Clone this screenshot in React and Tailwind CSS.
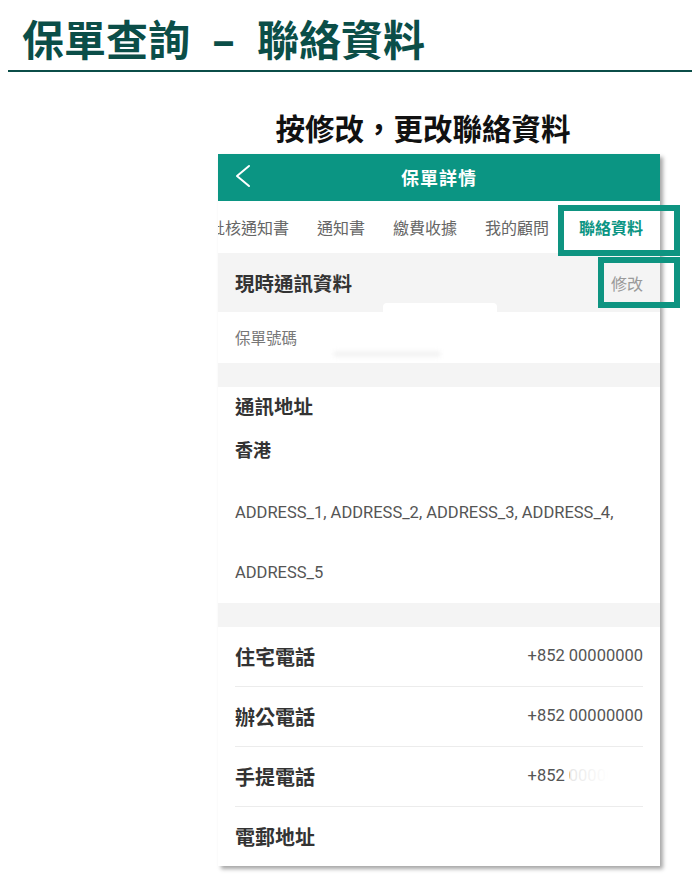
import React from "react";

const font = { fontFamily: '"Noto Sans CJK TC", "Noto Sans", sans-serif' };

const tabs = ["批核通知書", "通知書", "繳費收據", "我的顧問"];

const phones = [
  { label: "住宅電話", value: "+852 00000000" },
  { label: "辦公電話", value: "+852 00000000" },
  { label: "手提電話", value: "+852 00000000", masked: true },
];

const ChevronLeft = () => (
  <svg width="18" height="24" viewBox="0 0 18 24" fill="none">
    <path d="M15 2 L3 12 L15 22" stroke="white" strokeWidth="2" strokeLinecap="round" strokeLinejoin="round" />
  </svg>
);

const PhoneRow = ({ label, value, masked, last }) => (
  <div className={`mx-[17px] flex items-center justify-between ${last ? "h-[59px]" : "h-[60px] border-b border-[#ececec]"}`}>
    <span className="text-[20px] font-bold text-[#333]">{label}</span>
    {value && (
      <span className="relative text-[16.5px] text-[#555]" style={{ fontFamily: "Roboto, sans-serif" }}>
        {value}
        {masked && <span className="absolute top-[-4px] bottom-[-4px] left-[42px] right-[-4px] bg-gradient-to-r from-white/85 via-white to-white" />}
      </span>
    )}
  </div>
);

export default function App() {
  return (
    <div className="relative w-[692px] h-[876px] overflow-hidden bg-white" style={font}>
      {/* page title */}
      <div className="pt-[13px] pl-[22px] h-[64px] text-[42px] font-bold leading-[50px] text-[#0b4e48] whitespace-nowrap">
        保單查詢<span className="mx-[22px] font-black">–</span>聯絡資料
      </div>
      <div className="mt-[6px] ml-[8px] h-[2px] bg-[#0b4e48]" />

      <div className="mt-[38px] ml-[273px] w-[300px] text-center text-[29.5px] font-bold leading-[34px] text-[#111] whitespace-nowrap">
        按修改，更改聯絡資料
      </div>

      {/* phone screen */}
      <div className="relative mt-[10px] ml-[218px] w-[442px] bg-white shadow-[3px_3px_4px_rgba(0,0,0,0.35)]">
        <div className="relative flex h-[47px] items-center justify-center bg-[#0b9583]">
          <span className="absolute left-[16px] top-[10px]"><ChevronLeft /></span>
          <span className="text-[18px] font-bold tracking-[1px] text-white">保單詳情</span>
        </div>

        <div className="flex h-[52px] items-center overflow-hidden whitespace-nowrap">
          <div className="ml-[-9px] flex items-center gap-[28px] text-[16px] text-[#666]">
            {tabs.map((t) => (
              <span key={t}>{t}</span>
            ))}
            <span className="ml-[2px] font-bold text-[#0b9583]">聯絡資料</span>
          </div>
        </div>

        <div className="relative flex h-[59px] items-center justify-between bg-[#f4f4f4] px-[17px]">
          <span className="text-[19.5px] font-bold text-[#333]">現時通訊資料</span>
          <span className="text-[16px] text-[#9a9a9a]">修改</span>
          <span className="absolute bottom-0 left-[165px] h-[9px] w-[114px] rounded-t-[4px] bg-white" />
        </div>

        <div className="relative flex h-[51px] items-center px-[17px]">
          <span className="text-[15.5px] text-[#777]">保單號碼</span>
          <span className="absolute bottom-[6px] left-[115px] h-[6px] w-[108px] rounded-full bg-[#f3f3f3] blur-[2px]" />
        </div>

        <div className="h-[24px] bg-[#f4f4f4]" />

        <div className="px-[17px]">
          <div className="flex h-[38px] items-center text-[19.5px] font-bold text-[#333]">通訊地址</div>
          <div className="flex h-[48px] items-center text-[18px] font-bold text-[#333]">香港</div>
          <div className="mt-[10px] text-[16.5px] leading-[60px] text-[#555]" style={{ fontFamily: "Roboto, sans-serif" }}>
            <div>ADDRESS_1, ADDRESS_2, ADDRESS_3, ADDRESS_4,</div>
            <div>ADDRESS_5</div>
          </div>
        </div>

        <div className="h-[24px] bg-[#f4f4f4]" />

        {phones.map((p) => (
          <PhoneRow key={p.label} {...p} />
        ))}
        <PhoneRow label="電郵地址" last />
      </div>

      {/* highlight boxes */}
      <div className="absolute left-[558px] top-[205px] h-[51px] w-[122px] border-[6px] border-[#0e9481]" />
      <div className="absolute left-[598px] top-[257px] h-[51px] w-[82px] border-[6px] border-[#0e9481]" />
    </div>
  );
}
